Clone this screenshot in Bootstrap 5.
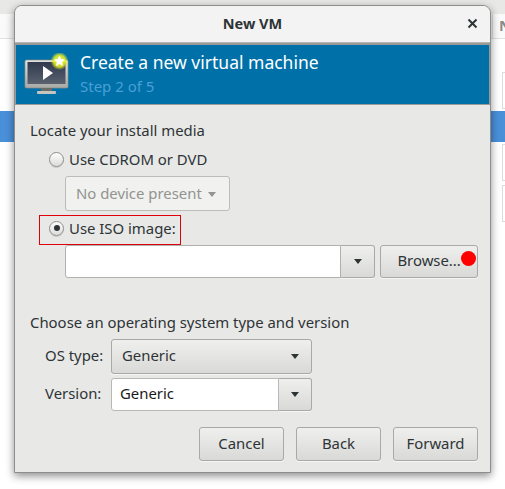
<!DOCTYPE html>
<html lang="en">
<head>
<meta charset="utf-8">
<title>New VM</title>
<link rel="stylesheet" href="https://cdn.jsdelivr.net/npm/bootstrap@5.3.0/dist/css/bootstrap.min.css">
<style>
html,body{height:100%;overflow:hidden}
body{background:#fff;font-family:"Noto Sans",sans-serif;font-size:14.9px;color:#2e3436;position:relative;width:505px;height:489px}
.bg-top{height:14px;background:#e8e8e7}
.bg-tabs{height:24px;background:#fafafa;border-bottom:1px solid #e2e2e2;box-sizing:content-box}
.bg-gap{height:72px}
.bg-sel{height:31px;background:#4a90d9}
.bg-n{position:absolute;left:499px;top:16px;color:#8a8a8a;font-weight:700;font-size:15px;line-height:18px}
.bg-tabline{position:absolute;left:492px;top:14px;height:24px;width:1px;background:#e0e0e0}
.bg-box{position:absolute;left:502px;width:10px;border:1px solid #dcdcdc;background:#fff}
.bx1{top:72px;height:37px}.bx2{top:144px;height:37px}.bx3{top:185px;height:37px}
.vm-win{position:absolute;left:14px;top:5px;width:477px;height:468px;background:#e8e8e7;border:1px solid #8d8d8b;border-radius:8px 8px 0 0;box-shadow:0 3px 9px rgba(0,0,0,.45);overflow:hidden}
.vm-title{height:37px;background:#f3f3f3;border-bottom:1px solid #b5b5b3;font-weight:700;font-size:14.5px;position:relative}
.vm-close{position:absolute;right:9px;top:10px;width:16px;height:16px}
.vm-banner{height:62px;background:#0071a8;border:1px solid #9a9a98;border-top-width:2px;padding-left:8px;gap:10px}
.vm-h{color:#fff;font-size:17.5px;line-height:24px;margin-top:5px}
.vm-step{color:#4a9fd6;font-size:15px;line-height:22px;margin-top:1px}
.vm-body{padding:13px 12px 0 15px}
.vm-line{line-height:24px}
.vm-radio{width:15px;height:15px;border-radius:50%;border:1px solid #8f8f8d;background:linear-gradient(#fdfdfd,#dcdcda);box-shadow:0 1px 0 rgba(0,0,0,.12);flex:none;margin-right:5px}
.vm-dot{width:6px;height:6px;border-radius:50%;background:#2e3436}
.vm-r1{margin:5px 0 0 19px;height:24px}
.vm-btn{background:linear-gradient(#efefee,#d9d9d7);border:1px solid #a9a9a7;border-radius:3px;box-shadow:0 1px 0 rgba(255,255,255,.6);color:#2e3436;height:34px;padding-bottom:2px}
.vm-caret{width:0;height:0;border-left:4.5px solid transparent;border-right:4.5px solid transparent;border-top:5px solid #2e3436;flex:none;margin-top:2px}
.vm-dis{width:165px;height:35px;margin:5px 0 0 35px;background:#f1f1f0;border:1px solid #bcbcba;border-radius:3px;color:#92948f;padding:0 10px 1px 10px;box-shadow:none;white-space:nowrap}
.vm-dis .vm-caret{border-top-color:#92948f;margin-left:6px}
.vm-iso{width:142px;height:30px;margin:4px 0 0 9px;border:1px solid #e0000a;padding:0 0 4px 9px}
.vm-chooser{margin-left:35px;height:33px}
.vm-entry{width:277px;height:33px;background:#fff;border:1px solid #b0b0ae;border-radius:3px 0 0 3px}
.vm-drop{width:34px;height:33px;border-left:0;border-radius:0 3px 3px 0}
.vm-browse{width:98px;height:33px;margin-left:5px;position:relative}
.vm-reddot{position:absolute;width:15px;height:15px;border-radius:50%;background:#f00;right:1px;top:5px}
.vm-os{margin-top:32px}
.vm-grid{margin-left:15px;height:34px;margin-top:5px}
.vm-grid2{margin-top:4px}
.vm-lbl{width:66px;flex:none;padding-bottom:1px}
.vm-combo{width:201px;height:35px;padding:0 12px 2px 10px}
.vm-combotext{width:168px;height:33px;background:#fff;border:1px solid #b8b8b6;border-radius:3px 0 0 3px;padding:0 0 1px 8px;color:#1a1a1a}
.vm-combodrop{width:33px;height:33px;border-left:0;border-radius:0 3px 3px 0}
.vm-actions{position:absolute;right:12px;bottom:11px;gap:12px}
.vm-act{width:85px;height:34px}
</style>
</head>
<body>
<div class="bg-top"></div>
<div class="bg-tabs"></div>
<div class="bg-gap"></div>
<div class="bg-sel"></div>
<div class="bg-tabline"></div>
<div class="bg-n">N</div>
<div class="bg-box bx1"></div>
<div class="bg-box bx2"></div>
<div class="bg-box bx3"></div>

<div class="vm-win">
  <div class="vm-title d-flex align-items-center justify-content-center">New VM
    <svg class="vm-close" viewBox="0 0 16 16"><path d="M3.5 3.5l8 8M11.5 3.5l-8 8" stroke="#2e3436" stroke-width="2" fill="none"/></svg>
  </div>
  <div class="vm-banner d-flex">
    <svg width="46" height="44" viewBox="0 0 46 44" class="flex-none align-self-center">
      <defs>
        <radialGradient id="gl"><stop offset="0" stop-color="#fbff50"/><stop offset=".65" stop-color="#e8f020" stop-opacity=".85"/><stop offset="1" stop-color="#e8f020" stop-opacity="0"/></radialGradient>
        <linearGradient id="sc" x1="0" y1="0" x2="0" y2="1"><stop offset="0" stop-color="#2f3a4c"/><stop offset="1" stop-color="#5a6270"/></linearGradient>
        <linearGradient id="bz" x1="0" y1="0" x2="0" y2="1"><stop offset="0" stop-color="#e4e4e2"/><stop offset="1" stop-color="#a9a9a6"/></linearGradient>
      </defs>
      <rect x="1" y="7" width="43" height="28" rx="1.5" fill="url(#bz)" stroke="#8d8d8a" stroke-width=".7"/>
      <rect x="3.5" y="9" width="38" height="22" fill="url(#sc)"/>
      <polygon points="19,13 19,27 29,20" fill="#fff"/>
      <rect x="17" y="35" width="11" height="3" fill="#6b6b68"/>
      <rect x="13" y="38" width="19" height="3" rx="1" fill="#c4c4c1"/>
      <circle cx="35.5" cy="8" r="9" fill="url(#gl)"/>
      <polygon points="35.5,2.5 37.2,6 41,6.5 38.2,9.1 38.9,12.9 35.5,11.1 32.1,12.9 32.8,9.1 30,6.5 33.8,6" fill="#fff"/>
    </svg>
    <div>
      <div class="vm-h">Create a new virtual machine</div>
      <div class="vm-step">Step 2 of 5</div>
    </div>
  </div>
  <div class="vm-body">
    <div class="vm-line">Locate your install media</div>
    <div class="vm-r1 d-flex align-items-center"><span class="vm-radio"></span><span>Use CDROM or DVD</span></div>
    <div class="vm-btn vm-dis d-flex align-items-center">No device present<span class="vm-caret"></span></div>
    <div class="vm-iso d-flex align-items-center"><span class="vm-radio d-flex align-items-center justify-content-center"><span class="vm-dot"></span></span><span>Use ISO image:</span></div>
    <div class="vm-chooser d-flex">
      <div class="vm-entry"></div>
      <div class="vm-btn vm-drop d-flex align-items-center justify-content-center"><span class="vm-caret"></span></div>
      <div class="vm-btn vm-browse d-flex align-items-center justify-content-center">Browse...<span class="vm-reddot"></span></div>
    </div>
    <div class="vm-os vm-line">Choose an operating system type and version</div>
    <div class="vm-grid d-flex align-items-center">
      <span class="vm-lbl">OS type:</span>
      <div class="vm-btn vm-combo d-flex align-items-center justify-content-between">Generic<span class="vm-caret"></span></div>
    </div>
    <div class="vm-grid vm-grid2 d-flex align-items-center">
      <span class="vm-lbl">Version:</span>
      <div class="vm-combotext d-flex align-items-center">Generic</div>
      <div class="vm-btn vm-combodrop d-flex align-items-center justify-content-center"><span class="vm-caret"></span></div>
    </div>
  </div>
  <div class="vm-actions d-flex">
    <div class="vm-btn vm-act d-flex align-items-center justify-content-center">Cancel</div>
    <div class="vm-btn vm-act d-flex align-items-center justify-content-center">Back</div>
    <div class="vm-btn vm-act d-flex align-items-center justify-content-center">Forward</div>
  </div>
</div>
<script src="https://cdn.jsdelivr.net/npm/bootstrap@5.3.0/dist/js/bootstrap.bundle.min.js"></script>
</body>
</html>
